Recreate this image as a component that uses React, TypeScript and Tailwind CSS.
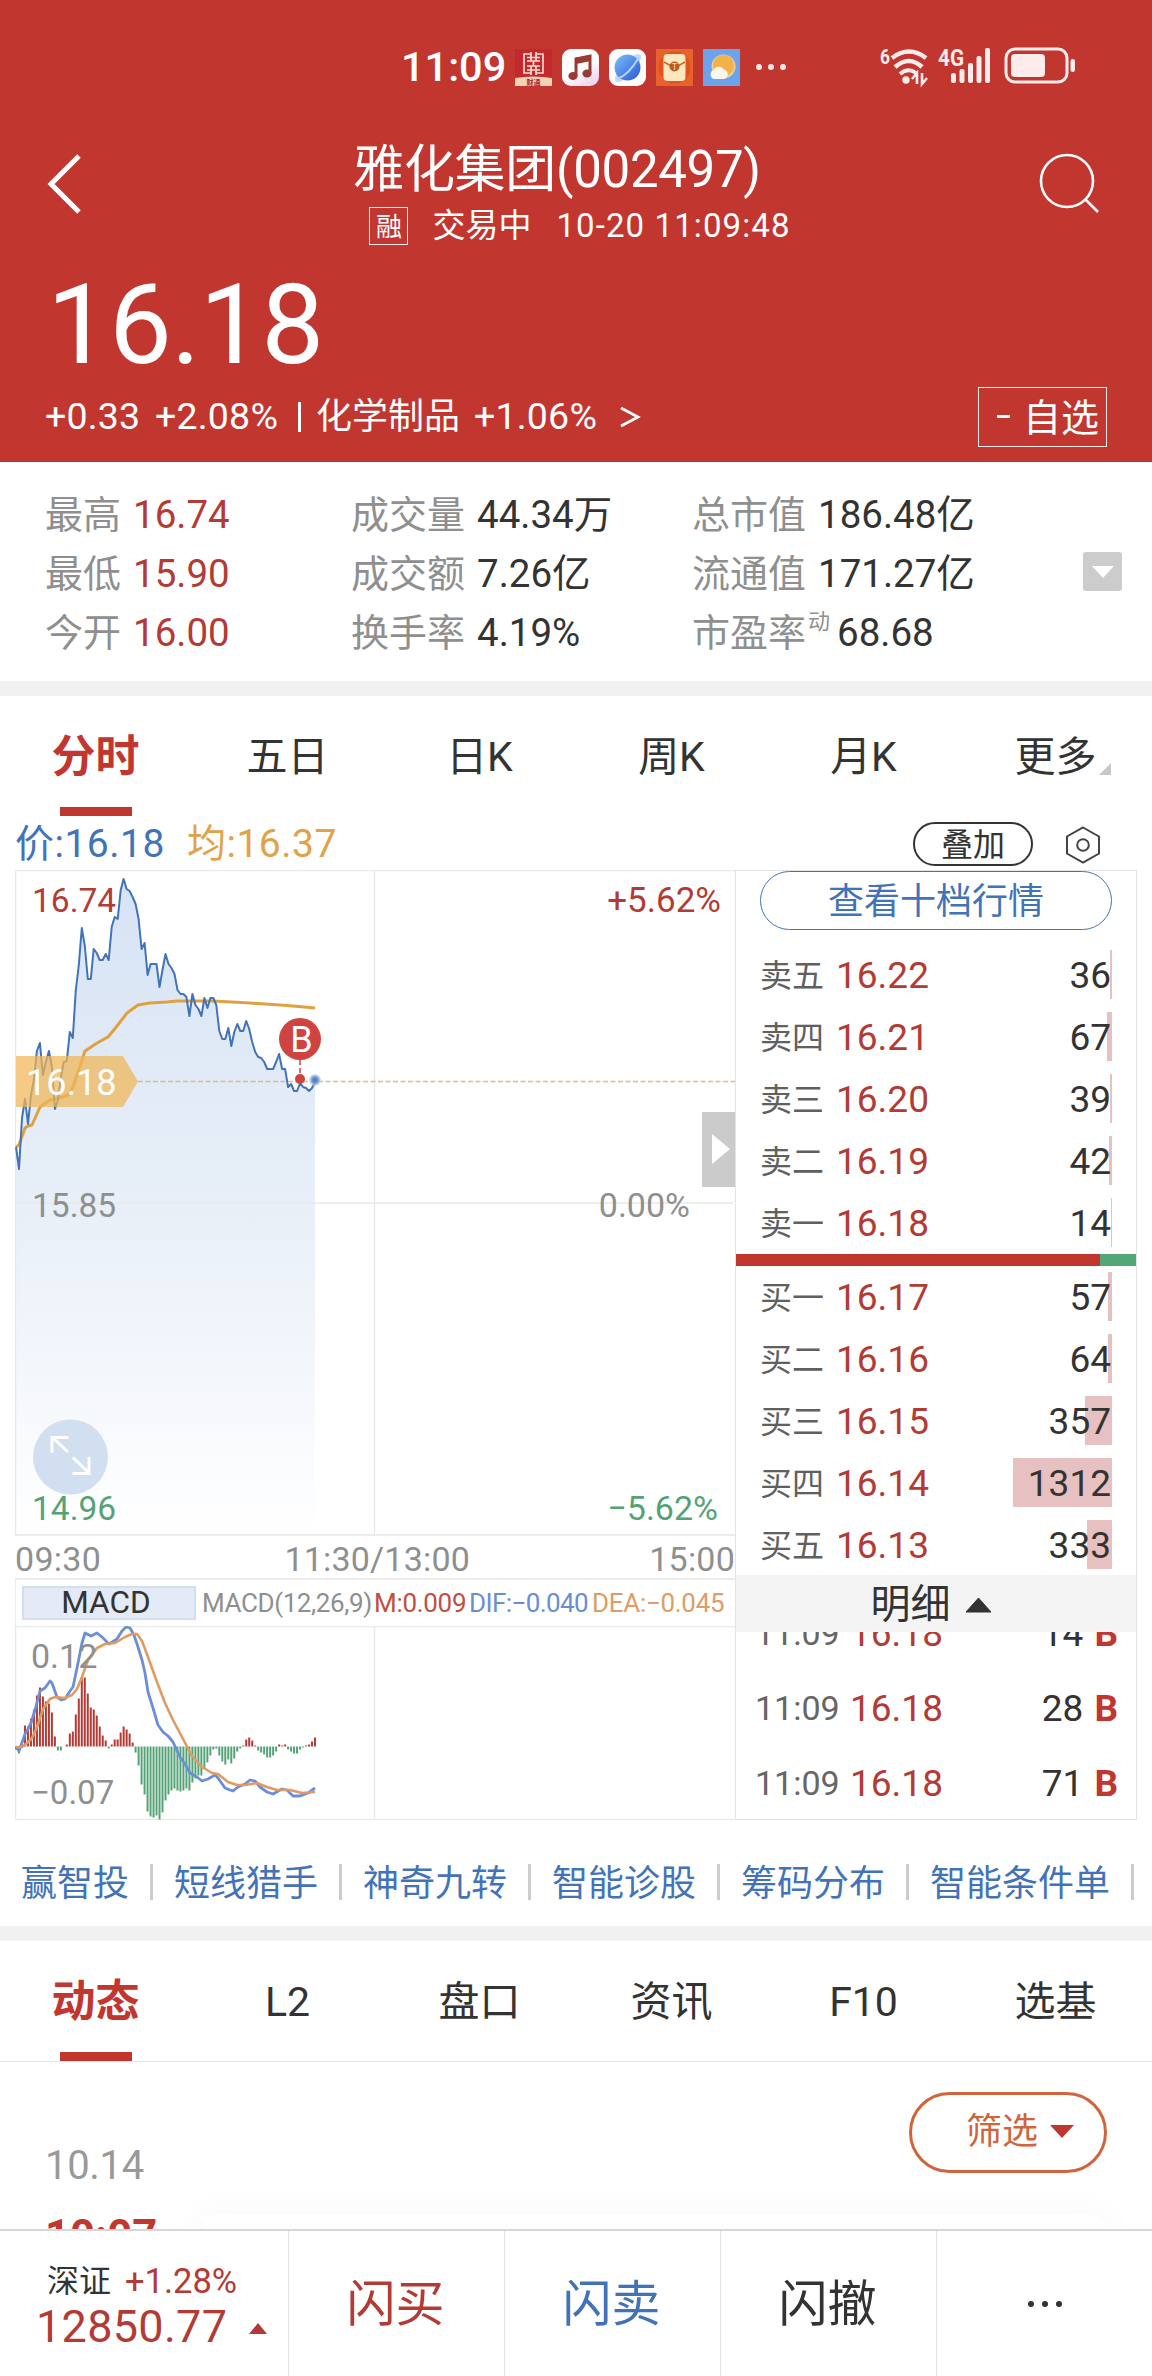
import type { ReactNode } from 'react'
import clsx from 'clsx'

const STATS = [
  [
    { label: '最高', value: '16.74' },
    { label: '最低', value: '15.90' },
    { label: '今开', value: '16.00' },
  ],
  [
    { label: '成交量', value: '44.34万' },
    { label: '成交额', value: '7.26亿' },
    { label: '换手率', value: '4.19%' },
  ],
  [
    { label: '总市值', value: '186.48亿' },
    { label: '流通值', value: '171.27亿' },
    { label: '市盈率', value: '68.68', sup: '动' },
  ],
]

interface Level {
  label: string
  price: string
  volume: number
  bar: number
}

const ASKS: Level[] = [
  { label: '卖五', price: '16.22', volume: 36, bar: 2 },
  { label: '卖四', price: '16.21', volume: 67, bar: 5 },
  { label: '卖三', price: '16.20', volume: 39, bar: 2 },
  { label: '卖二', price: '16.19', volume: 42, bar: 3 },
  { label: '卖一', price: '16.18', volume: 14, bar: 1 },
]

const BIDS: Level[] = [
  { label: '买一', price: '16.17', volume: 57, bar: 4 },
  { label: '买二', price: '16.16', volume: 64, bar: 4 },
  { label: '买三', price: '16.15', volume: 357, bar: 27 },
  { label: '买四', price: '16.14', volume: 1312, bar: 99 },
  { label: '买五', price: '16.13', volume: 333, bar: 25 },
]

const TRADES = [14, 28, 71]

const LINKS = ['赢智投', '短线猎手', '神奇九转', '智能诊股', '筹码分布', '智能条件单']

// one sample per minute since 09:30
const PRICE_Y = [
  277, 299, 248, 229, 254, 225, 210, 181, 173, 205, 192, 181, 197, 239, 230, 207, 192, 191, 162, 168,
  120, 95, 58, 76, 109, 109, 79, 83, 90, 90, 84, 90, 57, 47, 49, 20, 9, 19, 21, 27,
  34, 49, 79, 73, 105, 94, 94, 94, 117, 100, 84, 94, 98, 104, 120, 124, 124, 127, 146, 124,
  135, 139, 146, 128, 138, 128, 128, 135, 161, 169, 169, 158, 176, 162, 154, 161, 161, 151, 159, 172,
  182, 187, 188, 192, 199, 199, 199, 192, 184, 199, 199, 217, 214, 221, 221, 213, 217, 218, 221, 218,
  212,
]

const MACD_BARS = [
  -3, -7, 4, 21, 20, 28, 37, 51, 59, 50, 45, 43, 34, 10, -4, -4, 0, 2, 13, 15,
  32, 48, 69, 69, 53, 39, 37, 31, 20, 11, 6, -2, 2, 7, 7, 14, 20, 17, 13, 4,
  -6, -19, -38, -48, -65, -70, -71, -69, -73, -66, -54, -48, -44, -42, -44, -45, -44, -42, -44, -36,
  -32, -29, -29, -22, -16, -9, -3, -2, -9, -15, -18, -13, -17, -12, -5, -2, 1, 7, 9, 6,
  1, -4, -6, -8, -11, -11, -9, -5, 2, 1, 2, -3, -5, -7, -7, -3, -1, 1, 2, 5,
  9,
]

const AVG_POINTS =
  '1,277 4,275 10,258 13,256 17,255 25,237 35,230 48,227 53,225 58,217 63,202 70,181 82,173 93,167 102,156 112,143 123,135 135,133 152,132 162,131 198,131 235,133 265,135 278,136 300,138'
const DIF_POINTS =
  '1,121 4,125 10,108 13,103 16,97 20,84 25,65 30,62 35,55 37,57 42,71 46,74 50,73 55,65 58,61 62,42 67,17 70,7 76,10 82,7 87,11 94,18 102,13 107,5 111,1 115,2 119,9 123,21 127,34 130,47 133,66 138,82 143,99 148,106 153,110 158,116 165,131 170,138 175,147 182,151 187,155 193,153 200,149 203,152 210,162 215,164 218,165 223,161 230,158 235,154 240,155 245,161 252,166 258,168 267,163 272,164 278,170 285,170 293,167 300,162'
const DEA_POINTS =
  '1,121 7,121 12,117 17,112 22,101 28,83 35,73 40,71 50,72 57,69 62,63 67,51 73,34 82,22 90,18 100,17 110,11 117,8 122,8 127,15 133,31 142,56 150,77 158,94 167,111 177,130 187,141 197,147 203,148 213,156 222,159 230,159 242,157 252,161 262,164 275,164 287,167 300,166'

const pricePoints = PRICE_Y.map((y, i) => `${(1 + i * 2.99).toFixed(1)},${y}`).join(' ')

export default function App() {
  return (
    <div className="flex h-[2376px] w-[1152px] flex-col overflow-hidden bg-white font-['Roboto','Noto_Sans_CJK_SC',sans-serif] leading-none text-[#333] whitespace-nowrap">
      <Header />
      <Stats />
      <div className="h-[15px] shrink-0 bg-[#f1f1f1]" />
      <Tabs items={['分时', '五日', '日K', '周K', '月K', '更多']} more />
      <section className="flex h-[1004px] shrink-0 flex-col">
        <div className="flex h-[54px] items-center pr-[52px] pl-[15px] text-[39px]">
          <span className="w-[172px] pt-[2px] text-[#4273b8] tracking-[0.5px]">价:16.18</span>
          <span className="pt-[2px] text-[#e0a24a] tracking-[0.5px]">均:16.37</span>
          <span className="mt-[2px] ml-auto flex h-[44px] w-[120px] items-center justify-center rounded-full border-2 border-[#333] pt-[2px] text-[32px]">
            叠加
          </span>
          <svg className="mt-[3px] ml-[33px]" width="34" height="38" viewBox="0 0 34 38" fill="none" stroke="#444" strokeWidth="2">
            <path d="M17 1.5 L33 10.5 V27.5 L17 36.5 L1 27.5 V10.5 Z" />
            <circle cx="17" cy="19" r="5.8" />
          </svg>
        </div>
        <div className="flex h-[950px] pr-[15px] pl-[15px]">
          <div className="flex w-[720px] flex-col">
            <PriceChart />
            <div className="flex h-[42px] items-center justify-between pt-[3px] text-[34px] text-[#8f8f8f]">
              <span className="tracking-[0.3px]">09:30</span>
              <span className="pl-[4px] tracking-[0.2px]">11:30/13:00</span>
              <span className="tracking-[0.2px]">15:00</span>
            </div>
            <MacdLegend />
            <MacdChart />
          </div>
          <OrderBook />
        </div>
      </section>
      <nav className="flex h-[106px] shrink-0 items-center gap-[21px] pt-[18px] pl-[21px] text-[36px] text-[#4273b8]">
        {LINKS.map((name) => (
          <div key={name} className="flex shrink-0 items-center gap-[21px]">
            <span className="pt-[3px]">{name}</span>
            <span className="h-[36px] w-[3px] bg-[#ccc]" />
          </div>
        ))}
      </nav>
      <div className="h-[15px] shrink-0 bg-[#f1f1f1]" />
      <Tabs items={['动态', 'L2', '盘口', '资讯', 'F10', '选基']} />
      <Feed />
      <BottomBar />
    </div>
  )
}

function Header() {
  return (
    <header className="flex h-[462px] shrink-0 flex-col bg-[#c1362f] text-white">
      <StatusBar />
      <div className="flex h-[126px] items-start justify-between pr-[52px] pl-[46px]">
        <svg className="mt-[20px]" width="36" height="60" viewBox="0 0 36 60" fill="none" stroke="white" strokeWidth="5">
          <path d="M33 2 L5 30 L33 58" />
        </svg>
        <div className="flex flex-col items-center">
          <h1 className="mt-[6px] flex h-[58px] items-center pr-[6px] text-[51px] tracking-[-0.3px]">雅化集团(002497)</h1>
          <div className="mt-[9px] ml-[40px] flex h-[38px] items-center text-[33px]">
            <span className="flex h-[38px] w-[39px] items-center justify-center border border-white/90 pt-[1px] text-[26px]">融</span>
            <span className="mb-[2px] ml-[24px]">交易中</span>
            <span className="mb-[2px] ml-[25px] tracking-[1.1px]">10-20 11:09:48</span>
          </div>
        </div>
        <svg className="mt-[18px]" width="62" height="62" viewBox="0 0 62 62" fill="none" stroke="white" strokeWidth="2.6">
          <circle cx="29" cy="29" r="26" />
          <path d="M47 47 L60 60" />
        </svg>
      </div>
      <div className="flex h-[122px] items-center pt-[8px] pl-[47px] text-[112px] tracking-[-1px]">16.18</div>
      <div className="flex h-[80px] items-center pr-[45px] pb-[11px] pl-[45px] text-[37.5px]">
        <span className="w-[110px] tracking-[0.2px]">+0.33</span>
        <span className="w-[143px] tracking-[0.2px]">+2.08%</span>
        <span className="h-[30px] w-[3px] bg-white" />
        <span className="ml-[15px] w-[158px] text-[36px]">化学制品</span>
        <span className="w-[145px] tracking-[0.2px]">+1.06%</span>
        <svg width="22" height="24" viewBox="0 0 22 24" fill="none" stroke="white" strokeWidth="2.8">
          <path d="M2 3 L19 12 L2 21" />
        </svg>
        <span className="ml-auto flex h-[60px] w-[129px] shrink-0 items-center border border-white/90 pl-[18px]">
          <span className="mr-[13px] h-[3px] w-[13px] bg-white" />
          <span className="pt-[2px] text-[38px]">自选</span>
        </span>
      </div>
    </header>
  )
}

function AppIcon({ children, className }: { children: ReactNode; className?: string }) {
  return (
    <svg className={clsx('mr-[10px] shrink-0 overflow-hidden', className)} width="37" height="37" viewBox="0 0 37 37">
      {children}
    </svg>
  )
}

function StatusBar() {
  return (
    <div className="flex h-[134px] items-center pl-[401px]">
      <span className="mr-[9px] w-[105px] text-[41.5px] font-medium">11:09</span>
      <AppIcon>
        <rect width="37" height="37" fill="#c3282c" />
        <path d="M0 29 Q18 26 37 29 V37 H0 Z" fill="#f2d3b5" />
        <g fill="none" stroke="#f7dcd2" strokeWidth="1.7">
          <path d="M16 5 H9 V24 H16 M21 5 H28 V24 H21 M16 3 V12 M21 3 V12 M12 8.500 H25 M12 12 H25 M16 17 V26 M21 17 V26 M12 17 H25 M12 21 H25 M18.500 12 V17" />
        </g>
        <text x="18.5" y="36" textAnchor="middle" fontSize="7" fill="#a32a22" fontWeight="700">财通</text>
      </AppIcon>
      <AppIcon className="rounded-[9px]">
        <defs>
          <linearGradient id="music" x1="0" y1="0" x2="0.6" y2="1">
            <stop offset="0.6" stopColor="#fff" />
            <stop offset="1" stopColor="#efd9ef" />
          </linearGradient>
        </defs>
        <rect width="37" height="37" fill="url(#music)" />
        <path d="M14 27 V10 L28 7 V24" fill="none" stroke="#9b3a33" strokeWidth="3" />
        <path d="M13 9 L29 6 V12 L14 15 Z" fill="#9b3a33" />
        <ellipse cx="11" cy="27" rx="4.6" ry="4" fill="#9b3a33" />
        <ellipse cx="25" cy="24.5" rx="4.6" ry="4" fill="#9b3a33" />
      </AppIcon>
      <AppIcon className="rounded-[9px]">
        <defs>
          <linearGradient id="globe" x1="0" y1="0" x2="1" y2="1">
            <stop offset="0" stopColor="#7fc0fa" />
            <stop offset="1" stopColor="#2457d6" />
          </linearGradient>
        </defs>
        <rect width="37" height="37" fill="#fff" />
        <ellipse cx="19" cy="19" rx="18" ry="6.5" transform="rotate(-48 19 19)" fill="#c4dafa" />
        <circle cx="18.5" cy="18.5" r="13" fill="url(#globe)" />
        <path d="M8 30 Q20 26 30 8" fill="none" stroke="#b9d3fb" strokeWidth="2" />
      </AppIcon>
      <AppIcon>
        <rect width="37" height="37" fill="#e8622c" />
        <circle cx="18.5" cy="18.5" r="16" fill="#e2521f" />
        <rect x="7.5" y="5" width="22" height="27" rx="4" fill="#fde7bd" />
        <path d="M8 13 L18.5 19 L29 13" fill="none" stroke="#bd6a2a" strokeWidth="1.5" />
        <circle cx="18.5" cy="17.5" r="5" fill="#bd5a22" />
        <text x="18.5" y="20.6" textAnchor="middle" fontSize="8.5" fill="#fde7bd">T</text>
      </AppIcon>
      <AppIcon>
        <rect width="37" height="37" fill="#6ba3ec" />
        <circle cx="20.5" cy="17.5" r="12" fill="#eecf94" />
        <circle cx="20.5" cy="16.5" r="10.5" fill="#f1b24a" />
        <path d="M11 30 A4.8 4.8 0 0 1 10.5 21 A6 6 0 0 1 21 20.5 A4.9 4.9 0 0 1 21 30 Z" fill="#fdf6ec" />
      </AppIcon>
      <div className="ml-[6px] flex gap-[6px]">
        <span className="size-[6px] rounded-full bg-[#fde8e6]" />
        <span className="size-[6px] rounded-full bg-[#fde8e6]" />
        <span className="size-[6px] rounded-full bg-[#fde8e6]" />
      </div>
      <svg className="ml-[94px]" width="200" height="42" viewBox="0 0 200 42" fill="none" stroke="#fdeceb">
        <text x="0" y="18" fontSize="21" fontWeight="700" fill="#fdeceb" stroke="none" textLength="10" lengthAdjust="spacingAndGlyphs">6</text>
        <g strokeWidth="4.5">
          <path d="M12 12 Q29 -1 46 12" />
          <path d="M15 21 Q29 9 42 21" />
          <path d="M20 28 Q28 21 36 27" strokeWidth="4" />
        </g>
        <circle cx="26" cy="34" r="3.7" fill="#fdeceb" stroke="none" />
        <path d="M37 38 V27 L32 33 M42 27 V38 L47 32" strokeWidth="2.6" />
        <text x="58" y="20" fontSize="24" fontWeight="700" fill="#fdeceb" stroke="none" textLength="26" lengthAdjust="spacingAndGlyphs">4G</text>
        <g fill="#fdeceb" stroke="none">
          <rect x="71" y="27" width="5" height="10" rx="2" />
          <rect x="79.5" y="23" width="5" height="14" rx="2" />
          <rect x="88" y="17" width="5" height="20" rx="2" />
          <rect x="96.5" y="10" width="5" height="27" rx="2" />
          <rect x="105" y="2" width="5" height="35" rx="2" />
        </g>
        <rect x="126" y="3" width="61" height="33" rx="9" strokeWidth="3" />
        <rect x="131" y="8" width="34" height="23" rx="4" fill="#fdeceb" stroke="none" />
        <rect x="190.5" y="13" width="4.5" height="13" rx="2.2" fill="#fdeceb" stroke="none" />
      </svg>
    </div>
  )
}

function Stats() {
  return (
    <section className="flex h-[219px] shrink-0 items-center pl-[45px] text-[38px]">
      {STATS.map((column, index) => (
        <div
          key={column[0].label}
          className={clsx('flex flex-col pt-[5px]', index === 0 && 'w-[306px]', index === 1 && 'w-[341px]', index === 2 && 'w-[391px]')}
        >
          {column.map(({ label, value, ...rest }) => (
            <div key={label} className="flex h-[59px] items-center">
              <span className="text-[#8f8f8f]">{label}</span>
              {'sup' in rest && (
                <span className="mr-[-5px] mb-[22px] ml-[2px] text-[22px] text-[#8f8f8f]">{rest.sup}</span>
              )}
              <span className={clsx('ml-[12px] text-[38.5px]', index === 0 && 'text-[#b33b35]')}>{value}</span>
            </div>
          ))}
        </div>
      ))}
      <span className="flex h-[39px] w-[39px] items-center justify-center rounded-[3px] bg-[#ccc]">
        <svg width="22" height="12" viewBox="0 0 22 12" fill="white">
          <path d="M0 0 H22 L11 12 Z" />
        </svg>
      </span>
    </section>
  )
}

function Tabs({ items, more }: { items: string[]; more?: boolean }) {
  return (
    <nav className={clsx('grid shrink-0 grid-cols-6 text-[41px]', more ? 'h-[120px]' : 'h-[121px] border-b border-[#e6e6e6]')}>
      {items.map((item, i) => (
        <div
          key={item}
          className={clsx('flex flex-col items-center justify-between', i === 0 && 'text-[44px] font-bold text-[#c1362f]')}
        >
          <span className="flex h-[111px] items-center pt-[11px] pr-[1px]">
            {item}
            {more && i === items.length - 1 && (
              <svg className="mt-[24px] -mr-[14px] ml-[2px]" width="12" height="12" viewBox="0 0 12 12" fill="#c8c8c8">
                <path d="M12 0 V12 H0 Z" />
              </svg>
            )}
          </span>
          {i === 0 && <span className="h-[9px] w-[72px] bg-[#c1362f]" />}
        </div>
      ))}
    </nav>
  )
}

function PriceChart() {
  return (
    <svg className="shrink-0" width="720" height="666" viewBox="0 0 720 666">
      <defs>
        <linearGradient id="area" x1="0" y1="0" x2="0" y2="666" gradientUnits="userSpaceOnUse">
          <stop offset="0" stopColor="#d6e3f5" />
          <stop offset="0.5" stopColor="#e8eff8" />
          <stop offset="1" stopColor="#ffffff" />
        </linearGradient>
        <radialGradient id="pulse">
          <stop offset="0" stopColor="#4273b8" />
          <stop offset="0.5" stopColor="#6e97cf" />
          <stop offset="1" stopColor="#c5d7ef" stopOpacity="0.6" />
        </radialGradient>
      </defs>
      <polygon points={`1,666 ${pricePoints} 300,666`} fill="url(#area)" />
      <path d="M0.5 666 V0.5 H720 M359.5 0 V666 M0 333 H718" fill="none" stroke="#e9e9e9" strokeWidth="1.5" />
      <path d="M0 665 H720" stroke="#ececec" strokeWidth="2" />
      <g fontSize="33.5">
        <text x="17" y="347" fill="#8f8f8f">15.85</text>
        <text x="675" y="347" fill="#8f8f8f" textAnchor="end" fontSize="34">0.00%</text>
        <text x="17" y="42" fill="#b33b35">16.74</text>
        <text x="706" y="42" fill="#b33b35" textAnchor="end" fontSize="35">+5.62%</text>
        <text x="17" y="650" fill="#55a276">14.96</text>
        <text x="703" y="650" fill="#55a276" textAnchor="end" fontSize="34">−5.62%</text>
      </g>
      <polyline points={AVG_POINTS} fill="none" stroke="#e0a040" strokeWidth="3" strokeLinejoin="round" />
      <polyline points={pricePoints} fill="none" stroke="#4273b8" strokeWidth="2" strokeLinejoin="round" />
      <path d="M123 211.5 H720" stroke="#e3b98e" strokeWidth="1.3" strokeDasharray="5 2.5" />
      <path d="M1 186 H108 L123 211.5 L108 237 H1 Z" fill="#f0b655" fillOpacity="0.72" />
      <text x="11" y="225" fontSize="36" fill="white">16.18</text>
      <path d="M285 190 V208" stroke="#cf4340" strokeWidth="1.5" strokeDasharray="5 3" />
      <circle cx="285" cy="169" r="21" fill="#cf4340" />
      <text x="286.5" y="182" fontSize="36" fill="white" textAnchor="middle">B</text>
      <circle cx="300" cy="210" r="6" fill="url(#pulse)" />
      <circle cx="285" cy="209" r="5" fill="#cf4340" />
      <circle cx="55.5" cy="587" r="37.5" fill="#d1dff1" />
      <path d="M37 583 V567.5 H53.5 M38 568 L53 582 M58 587.5 L73 602 M57.5 603.5 H74 V587" fill="none" stroke="white" strokeWidth="3" />
      <rect x="687" y="242" width="33" height="75" fill="#cbcbcb" />
      <path d="M697 264 L715 279 L697 294 Z" fill="white" />
    </svg>
  )
}

function MacdLegend() {
  return (
    <div className="flex h-[48px] shrink-0 items-center border-t-2 border-l border-[#ececec] pl-[6px] text-[26px]">
      <span className="flex h-[34px] w-[174px] shrink-0 items-center justify-center border-2 border-[#d3def1] bg-[#e4eaf6] pr-[6px] text-[31.5px]">
        MACD
      </span>
      <span className="ml-[6px] w-[172px] shrink-0 text-[#8f8f8f] tracking-[-0.4px]">MACD(12,26,9)</span>
      <span className="w-[95px] shrink-0 text-[#c0503f] tracking-[-0.3px]">M:0.009</span>
      <span className="w-[123px] shrink-0 text-[#6a8fd0] tracking-[-0.6px]">DIF:−0.040</span>
      <span className="text-[#dc9d68] tracking-[-0.3px]">DEA:−0.045</span>
    </div>
  )
}

function MacdChart() {
  return (
    <svg className="shrink-0" width="720" height="194" viewBox="0 0 720 194">
      <path d="M0.5 194 V0 M359.5 0 V194" stroke="#e9e9e9" strokeWidth="1.5" />
      <path d="M0 0.5 H720 M0 193.5 H720" stroke="#e9e9e9" strokeWidth="1.5" />
      {MACD_BARS.map((v, i) => (
        <rect
          key={i}
          x={i * 2.99}
          y={v > 0 ? 120.5 - v : 120.5}
          width="2"
          height={Math.abs(v)}
          fill={v > 0 ? '#b33a35' : '#55a276'}
        />
      ))}
      <polyline points={DIF_POINTS} fill="none" stroke="#6a8fd6" strokeWidth="2.8" strokeLinejoin="round" />
      <polyline points={DEA_POINTS} fill="none" stroke="#e09a64" strokeWidth="2.6" strokeLinejoin="round" />
      <g fontSize="34" fill="#8f8f8f">
        <text x="16" y="42">0.12</text>
        <text x="16" y="178" fontSize="33">−0.07</text>
      </g>
    </svg>
  )
}

function BookRow({ label, price, volume, bar }: Level) {
  return (
    <div className="relative flex h-[62px] items-center pr-[25px] pl-[24px] text-[37px]">
      <span
        className="absolute top-[6px] right-[24px] h-[49px] bg-[#e7c0c1]"
        style={{ width: bar }}
      />
      <span className="relative w-[76px] pt-[2px] text-[32px] text-[#606060]">{label}</span>
      <span className="relative text-[#b33b35]">{price}</span>
      <span className="relative ml-auto">{volume}</span>
    </div>
  )
}

function OrderBook() {
  return (
    <div className="flex w-[402px] flex-col border border-[#e3e3e3]">
      <button className="mr-[24px] ml-[24px] h-[59px] shrink-0 rounded-full border border-[#4273b8] pt-[2px] text-[36px] text-[#4273b8]">
        查看十档行情
      </button>
      <div className="flex h-[324px] shrink-0 flex-col pt-[14px]">
        {ASKS.map((level) => (
          <BookRow key={level.label} {...level} />
        ))}
      </div>
      <div className="flex h-[12px] shrink-0">
        <span className="flex-1 bg-[#c1362f]" />
        <span className="w-[36px] bg-[#53a776]" />
      </div>
      <div className="h-[309px] shrink-0">
        {BIDS.map((level) => (
          <BookRow key={level.label} {...level} />
        ))}
      </div>
      <div className="flex h-[57px] shrink-0 items-center justify-center gap-[14px] bg-[#f4f4f4] pt-[2px] pr-[10px] text-[40px]">
        明细
        <svg width="27" height="16" viewBox="0 0 27 16" fill="#333">
          <path d="M13.5 1 L26 15 H1 Z" stroke="#333" strokeLinejoin="round" />
        </svg>
      </div>
      <div className="flex min-h-0 flex-1 flex-col justify-end overflow-hidden">
        {TRADES.map((volume) => (
          <div key={volume} className="flex h-[75px] shrink-0 items-center pt-[3px] pr-[18px] pl-[19px] text-[37px]">
            <span className="w-[95px] text-[34px] text-[#666]">11:09</span>
            <span className="text-[#b33b35]">16.18</span>
            <span className="ml-auto">{volume}</span>
            <span className="ml-[11px] text-[37px] font-bold text-[#c1362f]">B</span>
          </div>
        ))}
      </div>
    </div>
  )
}

function Feed() {
  return (
    <section className="flex h-[167px] shrink-0 overflow-hidden">
      <div className="w-[200px] pl-[45px]">
        <div className="mt-[84px] text-[40px] text-[#999] tracking-[-0.3px]">10.14</div>
        <div className="mt-[29px] text-[43.5px] font-bold text-[#c1362f]">10:07</div>
      </div>
      <div className="flex flex-1 flex-col items-end pr-[45px]">
        <div className="mt-[30px] flex h-[81px] w-[198px] shrink-0 items-center rounded-full border-3 border-[#d0643c] pb-[2px] pl-[54px] text-[36px] text-[#d0643c]">
          筛选
          <svg className="ml-[12px]" width="24" height="13" viewBox="0 0 24 13" fill="#c1362f">
            <path d="M0 0 H24 L12 13 Z" />
          </svg>
        </div>
        <div className="mt-[41px] h-[120px] w-full shrink-0 rounded-[20px] bg-white shadow-[0_0_40px_rgba(0,0,0,0.035)]" />
      </div>
    </section>
  )
}

function BottomBar() {
  return (
    <footer className="flex h-[147px] shrink-0 border-t-2 border-[#d6d6d6] bg-white text-[49px]">
      <div className="flex w-[289px] flex-col border-r border-[#e4e4e4] pt-[32px]">
        <div className="flex h-[36px] items-center pl-[47px] text-[32px]">
          深证
          <span className="ml-[14px] text-[34.5px] text-[#b33b35]">+1.28%</span>
        </div>
        <div className="mt-[6px] flex h-[42px] items-center pl-[36px] text-[45px] text-[#b33b35]">
          <span className="tracking-[0.3px]">12850.77</span>
          <svg className="mt-[4px] ml-[22px]" width="18" height="11" viewBox="0 0 18 11" fill="#b33b35">
            <path d="M9 0 L18 11 H0 Z" />
          </svg>
        </div>
      </div>
      <div className="flex w-[216px] items-center justify-center border-r border-[#e4e4e4] pt-[2px] pr-[2px] text-[#b33b35]">闪买</div>
      <div className="flex w-[216px] items-center justify-center border-r border-[#e4e4e4] pt-[2px] pr-[2px] text-[#4273b8]">闪卖</div>
      <div className="flex w-[216px] items-center justify-center border-r border-[#e4e4e4] pt-[2px] pr-[2px]">闪撤</div>
      <div className="flex flex-1 items-center justify-center gap-[8px]">
        <span className="size-[6px] rounded-full bg-[#333]" />
        <span className="size-[6px] rounded-full bg-[#333]" />
        <span className="size-[6px] rounded-full bg-[#333]" />
      </div>
    </footer>
  )
}
